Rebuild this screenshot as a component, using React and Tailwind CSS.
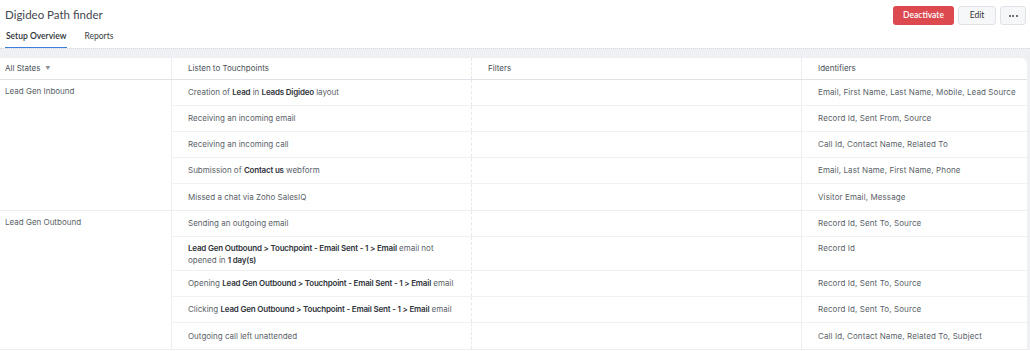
import React from 'react';

const groups = [
  {
    state: 'Lead Gen Inbound',
    rows: [
      { tp: <>Creation of <b>Lead</b> in <b>Leads Digideo</b> layout</>, ids: 'Email, First Name, Last Name, Mobile, Lead Source' },
      { tp: 'Receiving an incoming email', ids: 'Record Id, Sent From, Source' },
      { tp: 'Receiving an incoming call', ids: 'Call Id, Contact Name, Related To' },
      { tp: <>Submission of <b>Contact us</b> webform</>, ids: 'Email, Last Name, First Name, Phone' },
      { tp: 'Missed a chat via Zoho SalesIQ', ids: 'Visitor Email, Message' },
    ],
  },
  {
    state: 'Lead Gen Outbound',
    rows: [
      { tp: 'Sending an outgoing email', ids: 'Record Id, Sent To, Source' },
      { tp: <><b>Lead Gen Outbound &gt; Touchpoint - Email Sent - 1 &gt; Email</b> email not<br />opened in <b>1 day(s)</b></>, ids: 'Record Id', tall: true },
      { tp: <>Opening <b>Lead Gen Outbound &gt; Touchpoint - Email Sent - 1 &gt; Email</b> email</>, ids: 'Record Id, Sent To, Source' },
      { tp: <>Clicking <b>Lead Gen Outbound &gt; Touchpoint - Email Sent - 1 &gt; Email</b> email</>, ids: 'Record Id, Sent To, Source' },
      { tp: 'Outgoing call left unattended', ids: 'Call Id, Contact Name, Related To, Subject' },
    ],
  },
];

export default function App() {
  return (
    <div className="w-[1030px] h-[351px] overflow-hidden bg-white text-[#5a5f68] font-['Lato',sans-serif]">
      {/* Top bar */}
      <div className="flex items-start justify-between pl-[5px] pr-[4px] pt-[6px]">
        <h1 className="text-[11.5px] leading-[16px] text-[#42464d] pt-[1px]">Digideo Path finder</h1>
        <div className="flex gap-[4px]">
          <button className="h-[19px] w-[61px] rounded-[3px] bg-[#dc4a4f] text-white text-[8.5px] font-semibold">Deactivate</button>
          <button className="h-[19px] w-[38px] rounded-[3px] bg-[#f6f7f9] border border-[#dfe2e7] text-[#333] text-[8.5px]">Edit</button>
          <button className="h-[19px] w-[26px] rounded-[3px] bg-[#f6f7f9] border border-[#dfe2e7] flex items-center justify-center gap-[1.5px]">
            <span className="w-[2px] h-[2px] rounded-full bg-[#444]"></span>
            <span className="w-[2px] h-[2px] rounded-full bg-[#444]"></span>
            <span className="w-[2px] h-[2px] rounded-full bg-[#444]"></span>
          </button>
        </div>
      </div>
      <div className="flex gap-[17px] pl-[5px] mt-[5px] text-[8.5px]">
        <div className="text-[#2d3138] font-semibold pb-[4px] border-b-[1.5px] border-[#3b7ddd] px-[1px]">Setup Overview</div>
        <div className="text-[#3b3f46] pb-[4px]">Reports</div>
      </div>

      {/* Content */}
      <div className="bg-[#eef0f3] border-t border-dotted border-[#d6dae0] pt-[9px] pr-[3px]">
        <div className="bg-white rounded-tr-[6px] text-[8px] font-['Inter',sans-serif]">
          <div className="flex h-[22px] border-b border-[#dfe2e7] text-[#4a4f57]">
            <div className="w-[172px] border-r border-[#eceef1] pl-[5px] flex items-center gap-[5px]">
              All States
              <span className="text-[5px] text-[#8a8f97]">▼</span>
            </div>
            <div className="w-[300px] border-r border-dashed border-[#e6e8eb] pl-[16px] flex items-center">Listen to Touchpoints</div>
            <div className="w-[330px] border-r border-[#eceef1] pl-[16px] flex items-center">Filters</div>
            <div className="flex-1 pl-[16px] flex items-center">Identifiers</div>
          </div>
          {groups.map((g) => (
            <div key={g.state} className="flex border-b border-[#eceef1]">
              <div className="w-[172px] shrink-0 border-r border-[#eceef1] pl-[5px] pt-[5px]">{g.state}</div>
              <div className="flex-1 flex flex-col">
                {g.rows.map((r, i) => (
                  <div
                    key={i}
                    className={`flex ${r.tall ? 'h-[34px]' : 'h-[26px]'} ${i < g.rows.length - 1 ? 'border-b border-[#f0f1f3]' : ''}`}
                  >
                    <div className={`w-[300px] shrink-0 border-r border-dashed border-[#e6e8eb] pl-[16px] flex ${r.tall ? 'items-start pt-[5px] leading-[12px]' : 'items-center whitespace-nowrap'} [&_b]:font-semibold [&_b]:tracking-[-0.2px] [&_b]:text-[#2f333a]`}>
                      <span>{r.tp}</span>
                    </div>
                    <div className="w-[330px] shrink-0 border-r border-[#eceef1]"></div>
                    <div className={`flex-1 pl-[16px] flex whitespace-nowrap tracking-[0.1px] ${r.tall ? 'items-start pt-[5px]' : 'items-center'}`}>{r.ids}</div>
                  </div>
                ))}
              </div>
            </div>
          ))}
        </div>
      </div>
    </div>
  );
}
